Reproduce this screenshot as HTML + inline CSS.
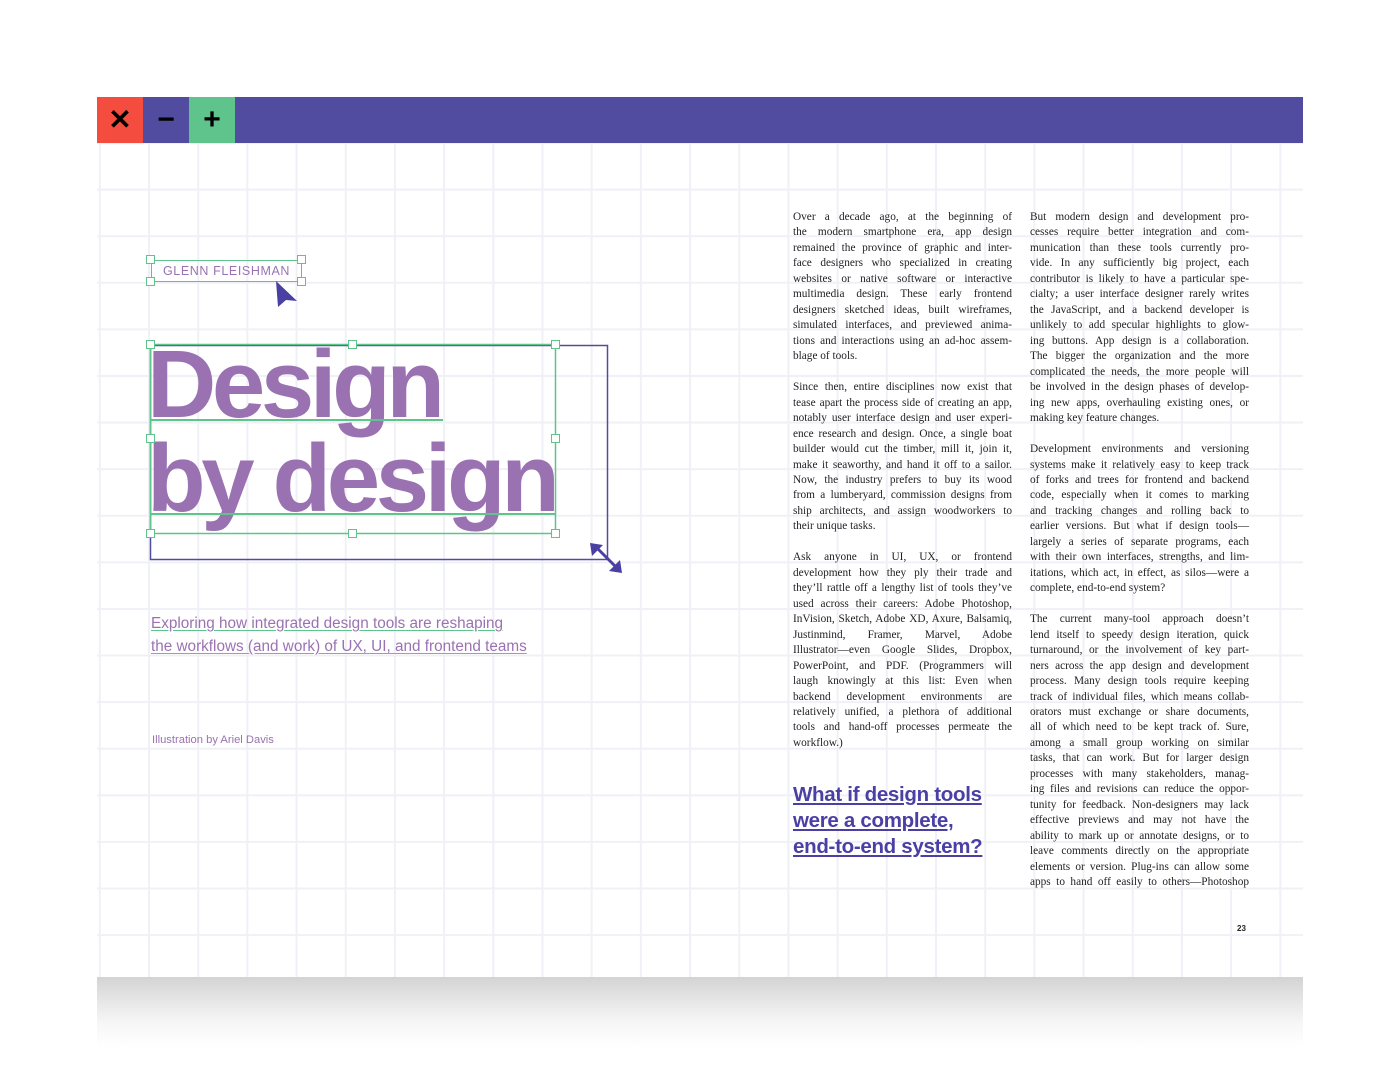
<!DOCTYPE html>
<html><head><meta charset="utf-8"><style>
*{margin:0;padding:0;box-sizing:border-box}
body{width:1400px;height:1075px;background:#fff;position:relative;overflow:hidden;font-family:"Liberation Sans",sans-serif}
.page{position:absolute;left:97px;top:97px;width:1206px;height:880px;background:#fff;overflow:hidden;
background-image:linear-gradient(to right,#f0f0f7 2px,transparent 2px),linear-gradient(to bottom,#f0f0f7 2px,transparent 2px);
background-size:49.2px 46.6px;background-position:51px 45px}
.shadow{position:absolute;left:97px;top:977px;width:1206px;height:70px;background:linear-gradient(#d3d3d3,#e4e4e4 30%,#f6f6f6 65%,#fff)}
.bar{position:absolute;left:97px;top:97px;width:1206px;height:46px;background:#524ca0}
.btn{position:absolute;top:0;width:46px;height:46px;color:#000;font-weight:bold;text-align:center;line-height:46px;font-size:30px}
.h{position:absolute;width:9px;height:9px;background:#fff;border:1.5px solid #5ec48b}
.col{position:absolute;top:210px;width:219px;font-family:"Liberation Serif",serif;font-size:11.3px;line-height:15.47px;color:#222}
.col div{white-space:nowrap}
.col .j{text-align:justify;text-align-last:justify;white-space:normal}
.col .b{height:15.47px}
</style></head><body>
<div class="shadow"></div>
<div class="page"></div>
<div class="bar">
<div class="btn" style="left:0;background:#f44d3f;font-size:28px">✕</div>
<div class="btn" style="left:46px;background:#524ca0">−</div>
<div class="btn" style="left:92px;background:#5ec48b">+</div>
</div>

<div style="position:absolute;left:151px;top:260px;width:151px;height:22px;border:1.5px solid #5ec48b"></div>
<div style="position:absolute;left:151px;top:264px;width:151px;text-align:center;font-size:12.5px;letter-spacing:0.6px;color:#9a72b2">GLENN FLEISHMAN</div>
<div class="h" style="left:146px;top:255px"></div><div class="h" style="left:297px;top:255px"></div>
<div class="h" style="left:146px;top:277px"></div><div class="h" style="left:297px;top:277px"></div>
<svg style="position:absolute;left:0;top:0" width="1400" height="1075">
<polygon points="276,281 297,301 286,300 278,307" fill="#4a3fa3"/>
<rect x="150.5" y="345.5" width="457" height="214" fill="none" stroke="#524ca0" stroke-width="1.5"/>
<rect x="150.5" y="344.5" width="405" height="189" fill="none" stroke="#5ec48b" stroke-width="1.5"/>
<line x1="598" y1="549" x2="615" y2="566" stroke="#4a3fa3" stroke-width="3"/>
<polygon points="590,543 603,545 592,556" fill="#4a3fa3"/>
<polygon points="622,573 609,571 620,560" fill="#4a3fa3"/>
</svg>
<div style="position:absolute;left:147px;top:338px;font-size:96px;font-weight:bold;letter-spacing:-4.4px;color:#9a72b2;line-height:94px">Design<br>by design</div>
<div style="position:absolute;left:150px;top:419px;width:293px;height:2px;background:#5ec48b"></div>
<div style="position:absolute;left:150px;top:513px;width:406px;height:2px;background:#5ec48b"></div>
<div class="h" style="left:146px;top:340px"></div><div class="h" style="left:348px;top:340px"></div><div class="h" style="left:551px;top:340px"></div>
<div class="h" style="left:146px;top:434px"></div><div class="h" style="left:551px;top:434px"></div>
<div class="h" style="left:146px;top:529px"></div><div class="h" style="left:348px;top:529px"></div><div class="h" style="left:551px;top:529px"></div>

<div style="position:absolute;left:151px;top:612px;font-size:15.3px;line-height:23px;color:#9a72b2;text-decoration:underline;text-decoration-color:#5ec48b;text-underline-offset:2px">Exploring how integrated design tools are reshaping<br>the workflows (and work) of UX, UI, and frontend teams</div>
<div style="position:absolute;left:152px;top:734px;font-size:11.2px;color:#9a72b2">Illustration by Ariel Davis</div>

<div style="position:absolute;left:793px;top:782px;font-size:20.5px;font-weight:bold;line-height:26px;color:#4a3fa3;text-decoration:underline;letter-spacing:-0.3px">What if design tools<br>were a complete,<br>end-to-end system?</div>
<div style="position:absolute;left:1237px;top:924px;font-size:8px;font-weight:bold;color:#222">23</div>

<div class="col" style="left:793px">
<div class="j">Over a decade ago, at the beginning of</div>
<div class="j">the modern smartphone era, app design</div>
<div class="j">remained the province of graphic and inter-</div>
<div class="j">face designers who specialized in creating</div>
<div class="j">websites or native software or interactive</div>
<div class="j">multimedia design. These early frontend</div>
<div class="j">designers sketched ideas, built wireframes,</div>
<div class="j">simulated interfaces, and previewed anima-</div>
<div class="j">tions and interactions using an ad-hoc assem-</div>
<div>blage of tools.</div>
<div class="b"></div>
<div class="j">Since then, entire disciplines now exist that</div>
<div class="j">tease apart the process side of creating an app,</div>
<div class="j">notably user interface design and user experi-</div>
<div class="j">ence research and design. Once, a single boat</div>
<div class="j">builder would cut the timber, mill it, join it,</div>
<div class="j">make it seaworthy, and hand it off to a sailor.</div>
<div class="j">Now, the industry prefers to buy its wood</div>
<div class="j">from a lumberyard, commission designs from</div>
<div class="j">ship architects, and assign woodworkers to</div>
<div>their unique tasks.</div>
<div class="b"></div>
<div class="j">Ask anyone in UI, UX, or frontend</div>
<div class="j">development how they ply their trade and</div>
<div class="j">they’ll rattle off a lengthy list of tools they’ve</div>
<div class="j">used across their careers: Adobe Photoshop,</div>
<div class="j">InVision, Sketch, Adobe XD, Axure, Balsamiq,</div>
<div class="j">Justinmind, Framer, Marvel, Adobe</div>
<div class="j">Illustrator—even Google Slides, Dropbox,</div>
<div class="j">PowerPoint, and PDF. (Programmers will</div>
<div class="j">laugh knowingly at this list: Even when</div>
<div class="j">backend development environments are</div>
<div class="j">relatively unified, a plethora of additional</div>
<div class="j">tools and hand-off processes permeate the</div>
<div>workflow.)</div>
</div>

<div class="col" style="left:1030px">
<div class="j">But modern design and development pro-</div>
<div class="j">cesses require better integration and com-</div>
<div class="j">munication than these tools currently pro-</div>
<div class="j">vide. In any sufficiently big project, each</div>
<div class="j">contributor is likely to have a particular spe-</div>
<div class="j">cialty; a user interface designer rarely writes</div>
<div class="j">the JavaScript, and a backend developer is</div>
<div class="j">unlikely to add specular highlights to glow-</div>
<div class="j">ing buttons. App design is a collaboration.</div>
<div class="j">The bigger the organization and the more</div>
<div class="j">complicated the needs, the more people will</div>
<div class="j">be involved in the design phases of develop-</div>
<div class="j">ing new apps, overhauling existing ones, or</div>
<div>making key feature changes.</div>
<div class="b"></div>
<div class="j">Development environments and versioning</div>
<div class="j">systems make it relatively easy to keep track</div>
<div class="j">of forks and trees for frontend and backend</div>
<div class="j">code, especially when it comes to marking</div>
<div class="j">and tracking changes and rolling back to</div>
<div class="j">earlier versions. But what if design tools—</div>
<div class="j">largely a series of separate programs, each</div>
<div class="j">with their own interfaces, strengths, and lim-</div>
<div class="j">itations, which act, in effect, as silos—were a</div>
<div>complete, end-to-end system?</div>
<div class="b"></div>
<div class="j">The current many-tool approach doesn’t</div>
<div class="j">lend itself to speedy design iteration, quick</div>
<div class="j">turnaround, or the involvement of key part-</div>
<div class="j">ners across the app design and development</div>
<div class="j">process. Many design tools require keeping</div>
<div class="j">track of individual files, which means collab-</div>
<div class="j">orators must exchange or share documents,</div>
<div class="j">all of which need to be kept track of. Sure,</div>
<div class="j">among a small group working on similar</div>
<div class="j">tasks, that can work. But for larger design</div>
<div class="j">processes with many stakeholders, manag-</div>
<div class="j">ing files and revisions can reduce the oppor-</div>
<div class="j">tunity for feedback. Non-designers may lack</div>
<div class="j">effective previews and may not have the</div>
<div class="j">ability to mark up or annotate designs, or to</div>
<div class="j">leave comments directly on the appropriate</div>
<div class="j">elements or version. Plug-ins can allow some</div>
<div class="j">apps to hand off easily to others—Photoshop</div>
</div>
</body></html>
